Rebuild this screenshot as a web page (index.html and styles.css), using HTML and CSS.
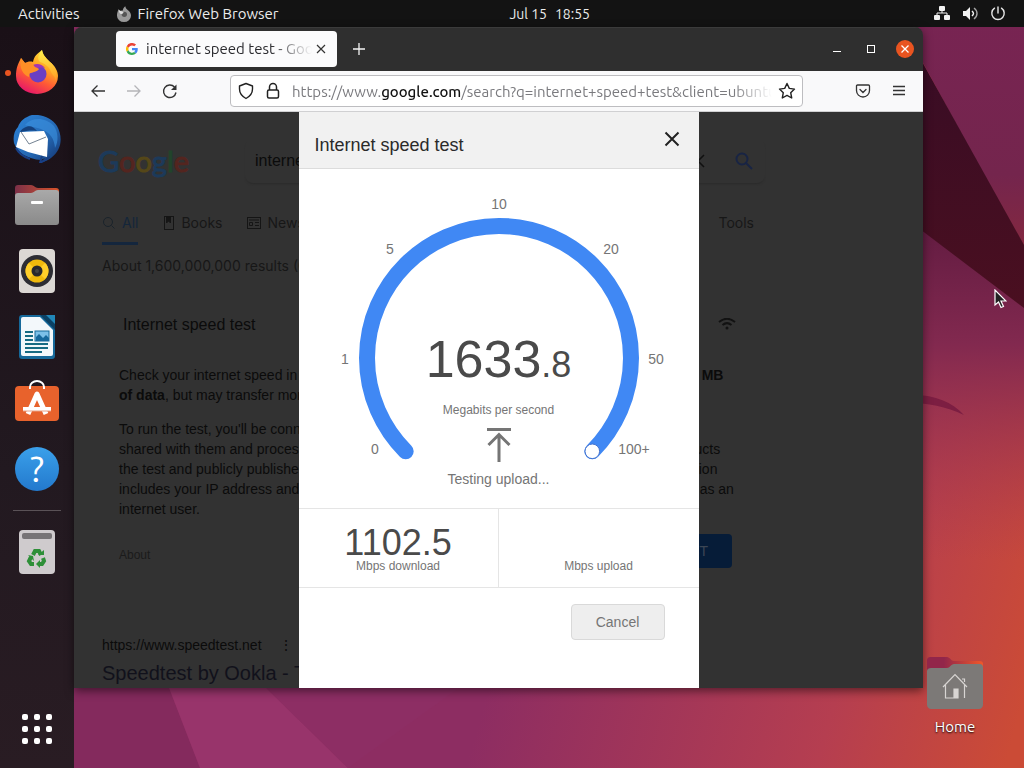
FILE: index.html
```html
<!DOCTYPE html>
<html lang="en">
<head>
<meta charset="UTF-8">
<meta name="viewport" content="width=device-width, initial-scale=1">
<title>internet speed test - Google Search</title>
<link rel="stylesheet" href="styles.css">
</head>
<body>

<svg class="wallpaper" viewBox="0 0 1024 768" preserveAspectRatio="none" aria-hidden="true">
  <defs>
    <linearGradient id="wpBase" gradientUnits="userSpaceOnUse" x1="510" y1="610" x2="1010" y2="750">
      <stop offset="0" stop-color="#8d2d62"/><stop offset=".65" stop-color="#b53e50"/><stop offset="1" stop-color="#cb4b36"/>
    </linearGradient>
    <linearGradient id="wpTop" x1="0" y1="0" x2="0" y2="1">
      <stop offset="0" stop-color="#782453"/><stop offset=".7" stop-color="#74254d"/><stop offset="1" stop-color="#84283f"/>
    </linearGradient>
    <linearGradient id="wpMid" x1="0" y1="0" x2="0" y2="1">
      <stop offset="0" stop-color="#5c193f"/><stop offset=".4" stop-color="#82294f"/><stop offset="1" stop-color="#a83850" stop-opacity="0"/>
    </linearGradient>
    <linearGradient id="wpDark" x1="0" y1="0" x2="0" y2="1">
      <stop offset="0" stop-color="#360c25"/><stop offset="1" stop-color="#4a0f20"/>
    </linearGradient>
  </defs>
  <rect width="1024" height="768" fill="url(#wpBase)"/>
  <path d="M900 200L1024 300V560H900z" fill="url(#wpMid)"/>
  <path d="M900 0H1024V250L900 20z" fill="url(#wpTop)"/>
  <path d="M900 22L1024 245V308L900 214z" fill="url(#wpDark)"/>
  <path d="M900 396c26-4 50 3 64 19-20-9-40-13-64-12z" fill="#7c1e42"/>
  <path d="M0 680H166L200 768H0z" fill="#842a5d"/>
  <path d="M166 680H258L348 768H200z" fill="#98346b"/>
  <path d="M258 680H470L348 768z" fill="#8d2e64"/>
</svg>

<header class="topbar">
  <div class="topbar-left">
    <button class="bar-btn">Activities</button>
    <button class="bar-btn app-menu">
      <svg width="16" height="16" viewBox="0 0 48 48" aria-hidden="true">
        <path d="M8 10c1 3 2 4 4 5 2-1 5-2 8-1 1-6 4-10 8-13 1 5 3 8 8 12 5 4 9 9 9 16a21 19 0 0 1-42 0c0-6 1-11 5-19z" fill="#9a9a9a"/>
        <circle cx="25" cy="25" r="8" fill="#555"/><path d="M8 10c3 6 9 5 15 9l-5 6c-5-1-9-3-10-15z" fill="#ddd"/>
      </svg>
      Firefox Web Browser
    </button>
  </div>
  <time class="clock"><span>Jul 15</span><span>18:55</span></time>
  <div class="topbar-right">
    <svg width="16" height="16" viewBox="0 0 16 16" fill="#f2f2f2" aria-label="Network">
      <rect x="5" y="0" width="6" height="5" rx="1"/><rect x="0" y="9" width="6" height="5" rx="1"/><rect x="10" y="9" width="6" height="5" rx="1"/>
      <path d="M3 10V7H13V10M8 4V7" fill="none" stroke="#f2f2f2"/>
    </svg>
    <svg width="16" height="16" viewBox="0 0 16 16" aria-label="Volume">
      <path d="M1 5h3l4-4v13l-4-4H1z" fill="#f2f2f2"/>
      <path d="M10 5c2 2 2 3 0 5" fill="none" stroke="#f2f2f2" stroke-width="1.4"/>
      <path d="M12 2c4 3 4 8 0 11" fill="none" stroke="#a5a5a5" stroke-width="1.4"/>
    </svg>
    <svg width="16" height="16" viewBox="0 0 16 16" fill="none" stroke="#e8e8e8" stroke-width="1.4" stroke-linecap="round" aria-label="Power">
      <path d="M8 1v6M4.500 2.200a6.200 6.200 0 1 0 7 0"/>
    </svg>
  </div>
</header>

<main class="desktop">
  <nav class="dock" aria-label="Dock">
    <button class="dock-item running" aria-label="Firefox">
      <svg viewBox="0 0 48 48">
        <defs>
          <linearGradient id="ffBody" x1=".8" y1="0" x2=".3" y2="1">
            <stop offset="0" stop-color="#fff04a"/><stop offset=".35" stop-color="#ffab22"/><stop offset=".65" stop-color="#ff5a35"/><stop offset="1" stop-color="#e5156b"/>
          </linearGradient>
          <linearGradient id="ffTail" x1="0" y1="0" x2="0" y2="1">
            <stop offset="0" stop-color="#fff24c"/><stop offset="1" stop-color="#ff9a24"/>
          </linearGradient>
        </defs>
        <path d="M8 9l4 5c2-1 5-2 8-1 1-6 4-8 9-12 1 5 3 7 8 12 5 4 8 9 8 14a21 18 0 0 1-42 0c0-8 2-12 5-18z" fill="url(#ffBody)"/>
        <circle cx="25" cy="25" r="8.500" fill="#6a3fc4"/>
        <path d="M20 16c4-2 9-1 12 3-5-1-8 0-10 1z" fill="#a235b4"/>
        <path d="M8 9l4 5c5-1 8 1 10 4 2 1 3 1 4 2-2 3-6 3-8 4-2 0-2 2-2 4-6-2-10-9-8-19z" fill="#ff8f26"/>
        <path d="M29 1c1 5 3 7 8 12 5 4 8 10 6 19-1-5-3-5-5-9-1-4-5-8-11-10-3-3-2-7 2-12z" fill="url(#ffTail)"/>
      </svg>
    </button>
    <button class="dock-item" aria-label="Thunderbird">
      <svg viewBox="0 0 48 48">
        <defs><linearGradient id="tb" x1="0" y1="0" x2="1" y2="1"><stop offset="0" stop-color="#2c83d8"/><stop offset=".6" stop-color="#2467b2"/><stop offset="1" stop-color="#14336e"/></linearGradient></defs>
        <path d="M19 0C29-1 39 3 44 11c6 11 5 24-6 32-3 2-6 4-10 4l4-4-4 2C15 44 4 38 1 28c-1-6 0-12 4-16C7 6 12 2 19 0z" fill="url(#tb)"/>
        <path d="M12 10c7-8 20-8 29 1 4 6 5 15 1 22-1-10-5-15-12-18-6-3-11-3-18-5z" fill="#3b8fdd" opacity=".65"/>
        <path d="M7 17l24-1 4 8-1 18L15 37 3 32z" fill="#fff"/>
        <path d="M8 17l8 12 17-7" fill="none" stroke="#748393"/>
        <path d="M11 13c5-3 9-2 13 3-6-1-10 0-17 1 1-2 2-3 4-4z" fill="#15417e"/>
        <path d="M3 33c3 6 8 9 14 11M29 41l-2 7 10-6" fill="none" stroke="#183f86" stroke-width="2"/>
      </svg>
    </button>
    <button class="dock-item" aria-label="Files">
      <svg viewBox="0 0 48 48">
        <defs>
          <linearGradient id="fBack"><stop offset="0" stop-color="#7b3048"/><stop offset="1" stop-color="#d9542b"/></linearGradient>
          <linearGradient id="fFront" x1="0" y1="0" x2="0" y2="1"><stop offset="0" stop-color="#a9a9a9"/><stop offset="1" stop-color="#8a8a8a"/></linearGradient>
        </defs>
        <path d="M2 7c0-2 1-3 3-3h13c3 0 4 3 7 3h18c2 0 3 1 3 3v12H2z" fill="url(#fBack)"/>
        <path d="M2 15c0-2 1-3 3-3h13c3 0 4-3 7-3h18c2 0 3 1 3 3v29c0 2-1 3-3 3H5c-2 0-3-1-3-3z" fill="url(#fFront)"/>
        <rect x="18" y="20" width="12" height="3" rx="1" fill="#fff"/>
      </svg>
    </button>
    <button class="dock-item" aria-label="Rhythmbox">
      <svg viewBox="0 0 48 48">
        <rect x="6" y="2" width="36" height="44" rx="4" fill="#dcd8d4"/>
        <circle cx="24" cy="24" r="16" fill="#2d2d33"/><circle cx="24" cy="24" r="11.500" fill="#f0b90c"/>
        <path d="M16 16a11 11 0 0 0 0 16l5-5v-6zM32 16a11 11 0 0 1 0 16l-5-5v-6z" fill="#ffcf2a"/>
        <circle cx="24" cy="24" r="5.500" fill="#28282d"/><circle cx="24" cy="24" r="2" fill="#444"/>
      </svg>
    </button>
    <button class="dock-item" aria-label="LibreOffice Writer">
      <svg viewBox="0 0 48 48">
        <path d="M9 2H42V43a3 3 0 0 1-3 3H9a3 3 0 0 1-3-3V5a3 3 0 0 1 3-3z" fill="#16699a"/>
        <path d="M10 4H27L40 17V41a2 2 0 0 1-2 2H10a2 2 0 0 1-2-2V6a2 2 0 0 1 2-2z" fill="#f3f8fb"/>
        <path d="M27 2H42V17z" fill="#0b4164"/><path d="M33 2H42V11z" fill="#2187b8"/>
        <path d="M12 19h8M12 23h8M12 27h8M12 31h23M12 35h23M12 39h17" stroke="#176b83" stroke-width="2"/>
        <rect x="22" y="18" width="14" height="10" fill="#7cc0e8" stroke="#176b9a"/>
        <path d="M23 28v-4l3-3 4 4 3-3 3 3v3z" fill="#17699c"/>
      </svg>
    </button>
    <button class="dock-item" aria-label="Ubuntu Software">
      <svg viewBox="0 0 48 48">
        <rect x="2" y="7" width="44" height="35" rx="4" fill="#e8622c"/>
        <path d="M17 10V8a7 6 0 0 1 14 0v2" fill="none" stroke="#fff" stroke-width="2"/>
        <path d="M15 35L24 15L33 35" fill="none" stroke="#fff" stroke-width="5" stroke-linejoin="round"/>
        <path d="M10 30h28" stroke="#fff" stroke-width="4"/><path d="M10 32h28" stroke="#e8a084"/>
      </svg>
    </button>
    <button class="dock-item help" aria-label="Help"><span>?</span></button>
    <hr>
    <button class="dock-item" aria-label="Trash">
      <svg viewBox="0 0 48 48">
        <rect x="6" y="2" width="36" height="44" rx="4" fill="#cfcbcd"/>
        <rect x="9" y="5" width="30" height="6" rx="2" fill="#777476"/>
        <g fill="none" stroke="#2e8f38" stroke-width="4">
          <path d="M20 27l2-4h4l2 4"/><path d="M30 30l1 3-2 3h-4"/><path d="M21 36h-3l-2-3 2-4"/>
        </g>
        <path d="M25 27h6v-5zM27 32v8l-4-4zM15 27l5 1 1 5z" fill="#2e8f38"/>
      </svg>
    </button>
    <button class="dock-item apps" aria-label="Show Applications">
      <svg viewBox="0 0 48 48" fill="#fff">
        <rect x="9" y="9" width="6" height="6" rx="2"/><rect x="21" y="9" width="6" height="6" rx="2"/><rect x="33" y="9" width="6" height="6" rx="2"/>
        <rect x="9" y="21" width="6" height="6" rx="2"/><rect x="21" y="21" width="6" height="6" rx="2"/><rect x="33" y="21" width="6" height="6" rx="2"/>
        <rect x="9" y="33" width="6" height="6" rx="2"/><rect x="21" y="33" width="6" height="6" rx="2"/><rect x="33" y="33" width="6" height="6" rx="2"/>
      </svg>
    </button>
  </nav>

  <div class="workspace">
    <section class="window" aria-label="Firefox">
      <div class="tabbar">
        <div class="tab">
          <svg width="12" height="12" viewBox="0 0 48 48" aria-hidden="true">
            <path fill="#ea4335" d="M24 9.500c3.500 0 6.700 1.200 9.200 3.600l6.900-6.900A24 24 0 0 0 2.600 13.200l8 6.200C12.400 13.700 17.700 9.500 24 9.500z"/>
            <path fill="#4285f4" d="M47 24.500c0-1.600-.2-3.100-.4-4.500H24v9h13c-.6 3-2.300 5.500-4.800 7.200l7.700 6C44.400 38 47 31.800 47 24.500z"/>
            <path fill="#fbbc05" d="M10.500 28.600a14.500 14.500 0 0 1 0-9.200l-8-6.200a24 24 0 0 0 0 21.600z"/>
            <path fill="#34a853" d="M24 48c6.500 0 12-2.100 15.900-5.800l-7.700-6a14.400 14.400 0 0 1-21.700-7.600l-8 6.200A24 24 0 0 0 24 48z"/>
          </svg>
          <span class="tab-title">internet speed test - Google Search</span>
          <button class="icon-btn" aria-label="Close tab">
            <svg width="10" height="10" viewBox="0 0 10 10" stroke="#333" stroke-width="1.2"><path d="M1 1l8 8M9 1L1 9"/></svg>
          </button>
        </div>
        <button class="icon-btn new-tab" aria-label="New tab">
          <svg width="12" height="12" viewBox="0 0 12 12" stroke="#f5f5f5" stroke-width="1.3"><path d="M6 0v12M0 6h12"/></svg>
        </button>
        <div class="win-controls">
          <button class="icon-btn" aria-label="Minimize"><svg width="18" height="18" viewBox="0 0 18 18"><path d="M5 11.500h8" stroke="#fff"/></svg></button>
          <button class="icon-btn" aria-label="Maximize"><svg width="18" height="18" viewBox="0 0 18 18"><rect x="5.500" y="5.500" width="7" height="7" fill="none" stroke="#fff"/></svg></button>
          <button class="icon-btn" aria-label="Close"><svg width="18" height="18" viewBox="0 0 18 18"><circle cx="9" cy="9" r="9" fill="#e95420"/><path d="M5.500 5.500l7 7M12.500 5.500l-7 7" stroke="#fff" stroke-width="1.3"/></svg></button>
        </div>
      </div>

      <div class="toolbar">
        <div class="nav-btns">
          <button class="icon-btn" aria-label="Back"><svg width="16" height="16" viewBox="0 0 16 16" fill="none" stroke="#333" stroke-width="1.3"><path d="M15 8H2M7.500 2.500L2 8l5.500 5.500"/></svg></button>
          <button class="icon-btn" aria-label="Forward" disabled><svg width="16" height="16" viewBox="0 0 16 16" fill="none" stroke="#b5b5b8" stroke-width="1.3"><path d="M1 8h13M8.500 2.500L14 8l-5.500 5.500"/></svg></button>
          <button class="icon-btn" aria-label="Reload"><svg width="16" height="16" viewBox="0 0 16 16"><path d="M14 9.500A6.300 6.300 0 1 1 12.500 4" fill="none" stroke="#333" stroke-width="1.4"/><path d="M14.500 1.500v5.500h-5.500z" fill="#333"/></svg></button>
        </div>
        <div class="urlbar">
          <svg width="16" height="18" viewBox="0 0 16 18" fill="none" stroke="#222" stroke-width="1.4" aria-hidden="true"><path d="M8 1.500l6.500 2.500v3c0 4-2 7-6.500 9.500C3.500 14 1.500 11 1.500 7V4z" stroke-linejoin="round"/></svg>
          <svg width="14" height="18" viewBox="0 0 14 18" fill="none" stroke="#222" stroke-width="1.5" aria-hidden="true"><rect x="1.500" y="8" width="11" height="8" rx="1.500"/><path d="M3.500 8V5a3.500 3.500 0 0 1 7 0v3"/></svg>
          <div class="url" role="textbox" contenteditable="true" spellcheck="false" aria-label="Address">https://www.<b>google.com</b>/search?q=internet+speed+test&amp;client=ubuntu</div>
          <button class="icon-btn" aria-label="Bookmark"><svg width="18" height="18" viewBox="0 0 18 18" fill="none" stroke="#222" stroke-width="1.4" stroke-linejoin="round"><path d="M9 1.500l2.300 4.900 5.200.7-3.800 3.600 1 5.300L9 13.400 4.300 16l1-5.300L1.500 7.100l5.200-.7z"/></svg></button>
        </div>
        <div class="tools">
          <button class="icon-btn" aria-label="Pocket"><svg width="16" height="16" viewBox="0 0 16 16" fill="none" stroke="#333" stroke-width="1.3" stroke-linecap="round"><path d="M2.500 2h11a1 1 0 0 1 1 1v4.500a6.500 6.500 0 0 1-13 0V3a1 1 0 0 1 1-1zM5 6.500l3 3 3-3"/></svg></button>
          <button class="icon-btn" aria-label="Menu"><svg width="16" height="16" viewBox="0 0 16 16" stroke="#333" stroke-width="1.3"><path d="M2 3.500h12M2 7.500h12M2 11.500h12"/></svg></button>
        </div>
      </div>

      <div class="page">
        <div class="g-head">
          <a class="g-logo" href="#"><span class="b">G</span><span class="r">o</span><span class="y">o</span><span class="b">g</span><span class="g">l</span><span class="r">e</span></a>
          <form class="g-search">
            <input type="search" aria-label="Search" value="internet speed test">
            <button type="reset" class="icon-btn" aria-label="Clear"><svg width="14" height="14" viewBox="0 0 14 14" stroke="#101010" stroke-width="1.5"><path d="M1 1l12 12M13 1L1 13"/></svg></button>
            <button type="button" class="icon-btn" aria-label="Google Search"><svg width="18" height="18" viewBox="0 0 18 18" fill="none" stroke="#182444" stroke-width="2"><circle cx="7" cy="7" r="5.500"/><path d="M11 11l6 6"/></svg></button>
          </form>
        </div>
        <nav class="g-tabs">
          <a class="active" href="#"><svg width="14" height="14" viewBox="0 0 14 14" fill="none" stroke="#1a232b"><circle cx="6" cy="6" r="4.500"/><path d="M9.500 9.500l3 3"/></svg>All</a>
          <a href="#"><svg width="12" height="14" viewBox="0 0 12 14" fill="none" stroke="#151515"><rect x="1.500" y=".5" width="9" height="13"/><path d="M3.500 1v6l2-2 2 2V1z" fill="#151515"/></svg>Books</a>
          <a href="#"><svg width="14" height="12" viewBox="0 0 14 12" fill="none" stroke="#151515"><rect x=".5" y=".5" width="13" height="11"/><path d="M2 3h10M8 5.500h4M8 8.500h4"/><path d="M2.500 5.500h3v3h-3z"/></svg>News</a>
          <a class="g-tools" href="#">Tools</a>
        </nav>
        <p class="g-stats">About 1,600,000,000 results (0.42 seconds)</p>

        <section class="g-card">
          <div class="g-card-head">
            <h2>Internet speed test</h2>
            <svg width="18" height="14" viewBox="0 0 18 14" fill="none" stroke="#121212" stroke-width="2" aria-hidden="true"><path d="M1 4c5-4 11-4 16 0M4.500 7c3-2.500 6-2.500 9 0"/><circle cx="9" cy="10" r="1.500" fill="#121212" stroke="none"/></svg>
          </div>
          <p>Check your internet speed in under 30 seconds. The speed test usually transfers less than <b>40 MB of data</b>, but may transfer more data on fast connections.</p>
          <p>To run the test, you'll be connected to Measurement Lab (M-Lab) and your IP address will be shared with them and processed by them in accordance with their privacy policy. M-Lab conducts the test and publicly publishes all test results to promote internet research. Published information includes your IP address and test results, but doesn't include any other information about you as an internet user.</p>
          <div class="g-card-foot">
            <a href="#">About</a>
            <button>RUN SPEED TEST</button>
          </div>
        </section>

        <article class="g-result">
          <div class="g-url">https://www.speedtest.net <span class="g-more">⋮</span></div>
          <a href="#">Speedtest by Ookla - The Global Broadband Speed Test</a>
        </article>

        <div class="modal" role="dialog" aria-labelledby="modalTitle">
          <div class="modal-head">
            <h1 id="modalTitle">Internet speed test</h1>
            <button class="icon-btn" aria-label="Close"><svg width="16" height="16" viewBox="0 0 16 16" stroke="#222" stroke-width="2"><path d="M1.500 1.500l13 13M14.500 1.500l-13 13"/></svg></button>
          </div>
          <div class="gauge">
            <svg class="dial" viewBox="0 0 400 339">
              <path d="M106.700 282.300A132 132 0 1 1 293.300 282.300" fill="none" stroke="#4088f4" stroke-width="16" stroke-linecap="round"/>
              <circle cx="293.300" cy="282.300" r="7.300" fill="#fff" stroke="#4272cf"/>
              <g class="ticks">
                <text x="76" y="285">0</text><text x="46" y="195">1</text><text x="91" y="85">5</text><text x="200" y="40">10</text>
                <text x="312" y="85">20</text><text x="357" y="195">50</text><text x="335" y="285">100+</text>
              </g>
            </svg>
            <div class="readout">
              <div class="speed">1633<small>.8</small></div>
              <div class="unit">Megabits per second</div>
              <svg width="24" height="36" viewBox="0 0 24 36" fill="none" stroke="#757575" stroke-width="3" aria-hidden="true"><path d="M0 2.500h24M12 35V7M1.500 18L12 7.500 22.500 18"/></svg>
              <div class="state">Testing upload...</div>
            </div>
          </div>
          <div class="results">
            <div class="result"><strong>1102.5</strong><span>Mbps download</span></div>
            <div class="result"><strong></strong><span>Mbps upload</span></div>
          </div>
          <div class="modal-foot"><button class="cancel">Cancel</button></div>
        </div>
      </div>
    </section>

    <a class="home" href="#">
      <svg width="56" height="52" viewBox="0 0 56 52" aria-hidden="true">
        <defs><linearGradient id="hBack"><stop offset=".3" stop-color="#92264a"/><stop offset="1" stop-color="#f0582a"/></linearGradient></defs>
        <path d="M0 4c0-3 1-4 4-4h16c3 0 4 4 7 4h25c3 0 4 1 4 3v12H0z" fill="url(#hBack)"/>
        <path d="M0 14c0-2 2-3 4-3h16c3 0 4-4 7-4h25c3 0 4 1 4 4v37c0 2-2 4-4 4H4c-2 0-4-2-4-4z" fill="#7c7977"/>
        <path d="M16 30L28 17.500 40 30M18.500 28v13H27M31 41h-4v-9h4zM37.500 28v13M35 22h2.500v3" fill="none" stroke="#d8d5d3" stroke-width="1.2"/>
        <path d="M27 32h4v9h-4z" fill="#d8d5d3"/>
      </svg>
      <span>Home</span>
    </a>

    <svg class="cursor" width="13" height="20" viewBox="0 0 13 20" aria-hidden="true"><path d="M1 1v15l3.500-3 2.500 5.500 2.500-1-2.500-5.500h5z" fill="#222" stroke="#fff" stroke-width="1.2"/></svg>
  </div>
</main>
</body>
</html>
```
FILE: styles.css
```css
:root{
  --ui:"Ubuntu","Noto Sans",sans-serif;
  --web:"Liberation Sans",Arial,sans-serif;
  --round:"Inter",sans-serif;
  --dim:#323232;--ink:#0b0b0b;--ink2:#171717;
  --text:#4a4a4a;--sub:#757575;--line:#e5e5e5
}
*{box-sizing:border-box;margin:0;padding:0}
body{min-height:100vh;display:flex;flex-direction:column;position:relative;background:#8d2d62;font-family:var(--ui);font-size:15px;overflow:hidden}
button{background:none;border:none;font:inherit;color:inherit;cursor:pointer}
a{color:inherit;text-decoration:none}
svg{display:block;flex:none}
.icon-btn{display:flex;align-items:center;justify-content:center}
.wallpaper{position:absolute;inset:0;width:100%;height:100%}

/* top bar */
.topbar{position:relative;display:grid;grid-template-columns:1fr auto 434px;align-items:center;height:27px;background:#131313;color:#ececec}
.topbar-left{display:flex;gap:36px;padding-left:18px}
.app-menu{display:flex;align-items:center;gap:6px}
.clock{display:flex;gap:8px;font-size:14px}
.topbar-right{display:flex;justify-content:flex-end;gap:12px;padding-right:18px}

/* dock */
.desktop{position:relative;flex:1;display:flex}
.dock{width:74px;display:flex;flex-direction:column;align-items:center;gap:18px;padding:22px 0 15px;background:linear-gradient(#1a1017,#221920 60%,#291c23)}
.dock-item{position:relative;width:48px;height:48px}
.dock-item svg{width:48px;height:48px}
.running::before{content:"";position:absolute;left:-8px;top:21px;width:6px;height:6px;border-radius:50%;background:#e95420}
.help{display:flex;align-items:center;justify-content:center}
.help span{width:44px;height:44px;border-radius:50%;background:linear-gradient(#3aa0ea,#2379cd);color:#fff;font-size:36px;line-height:44px}
.dock hr{width:48px;margin:-1px 0;border:none;border-top:1px solid #5a5257}
.apps{margin-top:auto}

/* browser window */
.workspace{position:relative;flex:1}
.window{position:absolute;inset:0 101px 80px 0;display:flex;flex-direction:column;border-radius:8px 8px 0 0;overflow:hidden;box-shadow:0 3px 10px rgba(0,0,0,.5)}
.tabbar{display:flex;align-items:center;height:44px;padding:0 0 2px 42px;background:#2f2f2f;border-top:1px solid #3b3b3b}
.tab{display:flex;align-items:center;gap:8px;width:221px;height:36px;padding:0 11px 0 10px;border-radius:4px;background:#fbfbfc;color:#2b2b2f}
.tab-title{flex:1;overflow:hidden;white-space:nowrap;mask-image:linear-gradient(90deg,#000 75%,transparent)}
.tab .icon-btn{margin-left:-4px}
.new-tab{margin-left:16px}
.win-controls{display:flex;gap:16px;margin-left:auto;padding-right:9px}
.toolbar{display:flex;align-items:center;height:41px;background:#f9f9fa;border-bottom:1px solid #d0d0d2}
.nav-btns{flex:none;display:flex;gap:20px;width:156px;padding-left:16px}
.urlbar{flex:1;min-width:0;display:flex;align-items:center;gap:12px;height:32px;padding:0 6px 0 7px;border:1px solid #bdbdc0;border-radius:4px;background:#fff}
.url{flex:1;min-width:0;overflow:hidden;white-space:nowrap;outline:none;color:#7a7a7e;mask-image:linear-gradient(90deg,#000 92%,transparent)}
.url b{font-weight:500;color:#111}
.urlbar .icon-btn{margin-left:-6px}
.tools{flex:none;display:flex;gap:20px;width:120px;padding-right:16px;justify-content:flex-end}

/* dimmed search page */
.page{position:relative;flex:1;min-height:0;overflow:hidden;background:var(--dim);color:var(--ink);font-family:var(--web)}
.g-head{display:flex;align-items:center;padding:27px 0 0 24px}
.g-logo{width:147px;font-family:"Lato",sans-serif;font-size:29px;line-height:44px;-webkit-text-stroke:1px}
.g-logo .b{color:#1c3a5a}
.g-logo .r{color:#54251f}
.g-logo .y{color:#554718}
.g-logo .g{color:#21452b}
.g-search{display:flex;align-items:center;gap:30px;width:520px;height:44px;padding:0 12px 0 10px;border-radius:8px;box-shadow:0 2px 2px -1px #2a2a2a}
.g-search input{flex:1;background:none;border:none;outline:none;font:16px var(--web);color:var(--ink)}
.g-tabs{display:flex;gap:25px;width:680px;margin-top:26px;padding-left:28px;font:14px/28px var(--round);color:var(--ink2)}
.g-tabs a{display:flex;align-items:center;gap:6px;padding-bottom:5px;border-bottom:3px solid transparent}
.g-tabs .active{color:#14263a;border-color:#14263d}
.g-tabs .g-tools{margin-left:auto}
.g-stats{margin-top:11px;padding-left:28px;font:14px/20px var(--round);color:var(--ink2)}
.g-card{width:620px;margin:37px 0 0 45px;font-size:14px;line-height:20px}
.g-card-head{display:flex;justify-content:space-between;align-items:center;margin-bottom:28px;padding:0 3px 0 4px}
.g-card h2{font-size:16px;font-weight:400;line-height:24px}
.g-card p{margin-bottom:14px;padding-right:3px}
.g-card-foot{display:flex;justify-content:space-between;align-items:center;margin-top:15px;padding-right:7px}
.g-card-foot a{padding-top:8px;font-size:12px;color:#1b1b1b}
.g-card-foot button{height:34px;padding:0 24px;border-radius:4px;background:#061c38;color:#3c4654}
.g-result{margin-top:67px;padding-left:28px}
.g-url{font-size:14px;line-height:20px}
.g-more{margin-left:14px}
.g-result a{font-size:20px;line-height:36px;color:#11111b}

/* speed test dialog */
.modal{position:absolute;top:0;bottom:0;left:50%;width:400px;margin-left:-200px;background:#fff;color:var(--sub)}
.modal-head{display:flex;justify-content:space-between;align-items:center;height:57px;padding:10px 19px 0 16px;background:#f1f1f1;border-bottom:1px solid #dcdcdc}
.modal-head h1{font-size:18px;font-weight:400;color:#2a2a2a}
.modal-head .icon-btn{align-self:flex-start;margin-top:9px}
.gauge{display:grid}
.gauge>*{grid-area:1/1}
.dial{width:100%}
.ticks{font-size:14px;fill:var(--sub);text-anchor:middle}
.readout{display:flex;flex-direction:column;align-items:center;align-self:end;padding-bottom:19px}
.speed{font-size:52px;line-height:60px;color:var(--text)}
.speed small{font-size:36px}
.unit{margin:6px 0 8px;font-size:12px;line-height:18px}
.state{margin-top:6px;font-size:14px;line-height:20px}
.results{display:grid;grid-template-columns:1fr 1fr;border:solid var(--line);border-width:1px 0}
.result{display:flex;flex-direction:column;align-items:center;height:78px;padding-top:16px;font-size:12px;line-height:14px}
.result:first-child{border-right:1px solid var(--line)}
.result strong{height:34px;font-size:36px;font-weight:400;line-height:36px;color:var(--text)}
.modal-foot{display:flex;justify-content:flex-end;padding:16px 34px}
.cancel{width:94px;height:36px;border:1px solid #d9d9d9;border-radius:4px;background:#eee;font-size:14px}

/* desktop items */
.home{position:absolute;right:41px;bottom:31px;display:flex;flex-direction:column;align-items:center;gap:8px;color:#fff;text-shadow:0 1px 2px #000}
.home span{line-height:20px}
.cursor{position:absolute;right:17px;top:262px}
```
